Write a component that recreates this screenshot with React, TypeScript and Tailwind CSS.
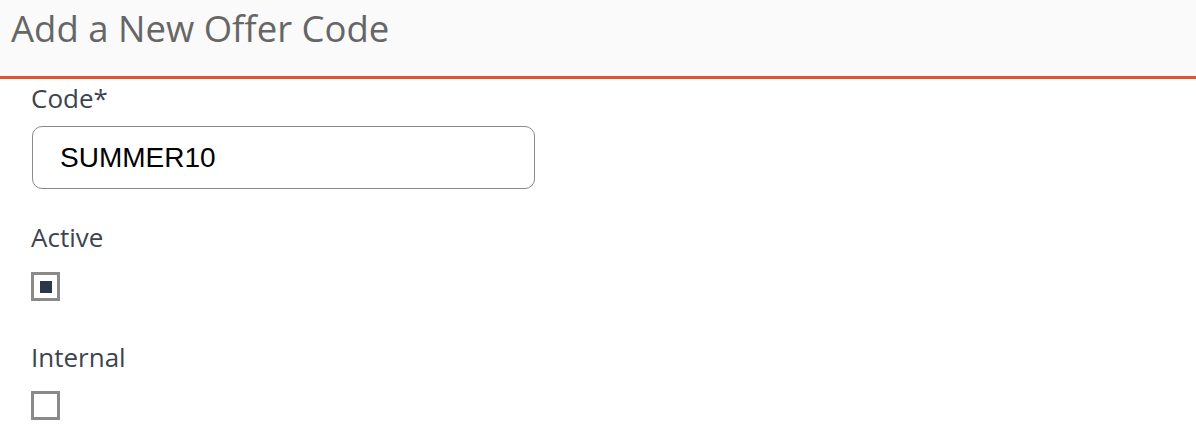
import React from 'react'

function Checkbox({ checked }: { checked: boolean }) {
  return (
    <div className="w-[29px] h-[29px] border-[3px] border-[#8a8a8a] bg-white flex items-center justify-center">
      {checked && <div className="w-[12px] h-[12px] bg-[#2b3648]" />}
    </div>
  )
}

export default function App() {
  return (
    <div className="w-[1196px] h-[440px] bg-white font-['Open_Sans',sans-serif]">
      <div className="h-[79px] bg-[#fafafa] border-b-[3px] border-[#e4532f] pl-[11px] pt-[3px]">
        <h1 className="text-[36.5px] leading-[50px] text-[#666666]">Add a New Offer Code</h1>
      </div>
      <div className="pl-[31px] pt-[3px]">
        <label className="block text-[26px] leading-[32px] text-[#3d4350]">Code*</label>
        <div className="mt-[12px] ml-[1px] w-[503px] h-[63px] border border-[#8a8a8a] rounded-[10px] flex items-center pl-[27px]">
          <span className="text-[28px] text-black font-['Liberation_Sans',sans-serif]">SUMMER10</span>
        </div>
        <label className="block mt-[32px] text-[26px] leading-[32px] text-[#3d4350]">Active</label>
        <div className="mt-[19px]">
          <Checkbox checked />
        </div>
        <label className="block mt-[40px] text-[26px] leading-[32px] text-[#3d4350]">Internal</label>
        <div className="mt-[18px]">
          <Checkbox checked={false} />
        </div>
      </div>
    </div>
  )
}
